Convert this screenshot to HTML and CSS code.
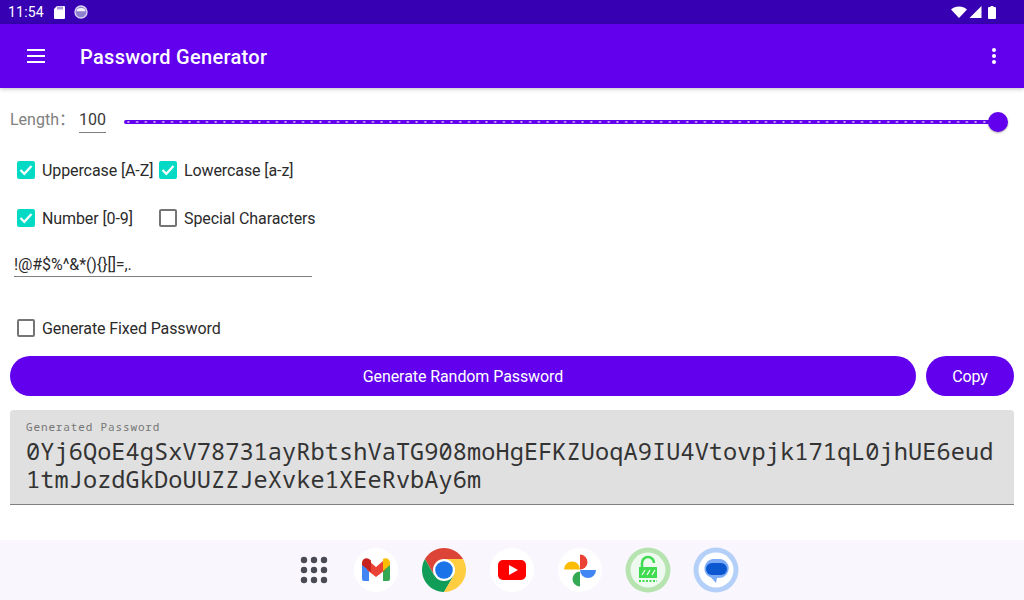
FILE: index.html
```html
<!DOCTYPE html>
<html lang="en">
<head>
<meta charset="utf-8">
<title>Password Generator</title>
<link rel="stylesheet" href="styles.css">
</head>
<body>
<div class="status">
  <div class="status-left">
    <span class="clock">11:54</span>
    <svg class="sd" width="12" height="14" viewBox="0 0 12 14"><path fill="#fff" d="M4 1h7a1 1 0 0 1 1 1v11a1 1 0 0 1-1 1H2a1 1 0 0 1-1-1V4z"/><path stroke="#3700B3" stroke-width=".8" d="M5 1.500v3M7 1.500v3M9 1.500v3"/></svg>
    <svg class="sync" width="14" height="14" viewBox="0 0 14 14"><circle cx="7" cy="7" r="6" fill="#8f7fd0" stroke="#d8d2f2" stroke-width="1.400"/><path fill="#fff" d="M2.600 6.200a4.400 3.200 0 0 1 8.800 0z" opacity=".9"/></svg>
  </div>
  <div class="status-right">
    <svg width="16" height="12" viewBox="0 0 16 12"><path fill="#fff" d="M0 3.400C2 1.400 5 .4 8 .4s6 1 8 3L8 12z"/></svg>
    <svg width="13" height="12" viewBox="0 0 13 12"><path fill="#fff" d="M12.500 0v12H.5z"/></svg>
    <svg class="batt" width="8" height="13" viewBox="0 0 8 13"><path fill="#fff" d="M2.500 0h3v1H7a1 1 0 0 1 1 1v10a1 1 0 0 1-1 1H1a1 1 0 0 1-1-1V2a1 1 0 0 1 1-1h1.500z"/></svg>
  </div>
</div>

<header class="appbar">
  <svg class="menu" width="18" height="14" viewBox="0 0 18 14"><path fill="#fff" d="M0 0h18v2H0zM0 6h18v2H0zM0 12h18v2H0z"/></svg>
  <h1 class="title">Password Generator</h1>
  <svg class="more" width="4" height="16" viewBox="0 0 4 16"><circle cx="2" cy="2" r="2" fill="#fff"/><circle cx="2" cy="8" r="2" fill="#fff"/><circle cx="2" cy="14" r="2" fill="#fff"/></svg>
</header>

<main class="content">
  <div class="length-row">
    <span class="length-label">Length：</span>
    <span class="length-value">100</span>
    <div class="slider"><span class="thumb"></span></div>
  </div>

  <div class="options">
    <label class="opt"><span class="box on"><svg width="14" height="12" viewBox="0 0 14 12"><path fill="none" stroke="#fff" stroke-width="2.200" d="M1.500 6l3.800 3.800L12.500 2"/></svg></span>Uppercase [A-Z]</label>
    <label class="opt"><span class="box on"><svg width="14" height="12" viewBox="0 0 14 12"><path fill="none" stroke="#fff" stroke-width="2.200" d="M1.500 6l3.800 3.800L12.500 2"/></svg></span>Lowercase [a-z]</label>
    <label class="opt"><span class="box on"><svg width="14" height="12" viewBox="0 0 14 12"><path fill="none" stroke="#fff" stroke-width="2.200" d="M1.500 6l3.800 3.800L12.500 2"/></svg></span>Number [0-9]</label>
    <label class="opt"><span class="box"></span>Special Characters</label>
  </div>

  <div class="chars">!@#$%^&amp;*(){}[]=,.</div>

  <label class="opt fixed"><span class="box"></span>Generate Fixed Password</label>

  <div class="actions">
    <button class="btn grow">Generate Random Password</button>
    <button class="btn copy">Copy</button>
  </div>

  <section class="output">
    <div class="output-label">Generated Password</div>
    <div class="output-value">0Yj6QoE4gSxV78731ayRbtshVaTG908moHgEFKZUoqA9IU4Vtovpjk171qL0jhUE6eud<br>1tmJozdGkDoUUZZJeXvke1XEeRvbAy6m</div>
  </section>
</main>

<nav class="dock">
  <svg class="apps" width="28" height="28" viewBox="0 0 28 28"><g fill="#4a4a55"><circle cx="4" cy="4" r="3.200"/><circle cx="14" cy="4" r="3.200"/><circle cx="24" cy="4" r="3.200"/><circle cx="4" cy="14" r="3.200"/><circle cx="14" cy="14" r="3.200"/><circle cx="24" cy="14" r="3.200"/><circle cx="4" cy="24" r="3.200"/><circle cx="14" cy="24" r="3.200"/><circle cx="24" cy="24" r="3.200"/></g></svg>

  <svg class="ico" width="46" height="46" viewBox="0 0 46 46"><circle cx="23" cy="23" r="22" fill="#fff"/>
    <path fill="#4285f4" d="M9 17h7v17h-5a2 2 0 0 1-2-2z"/><path fill="#34a853" d="M30 17h7v15a2 2 0 0 1-2 2h-5z"/>
    <path fill="#ea4335" d="M16 14l7 6 7-6 2 1v8l-9 7-9-7v-8z"/><path fill="#c5221f" d="M9 16c0-4 4-6 7-4l2 1.500V25l-9-7z"/><path fill="#fbbc04" d="M37 16c0-4-4-6-7-4v12l7-6z"/></svg>

  <svg class="ico" width="46" height="46" viewBox="0 0 46 46">
    <path fill="#db4437" d="M23 12H42.050A22 22 0 0 0 3.950 12L13.500 28.500z"/>
    <path fill="#0f9d58" d="M3.950 12A22 22 0 0 0 23 45L33 28H13z"/>
    <path fill="#ffcd40" d="M42.050 12A22 22 0 0 1 23 45L33 28 23 12z"/>
    <circle cx="23" cy="23" r="11" fill="#fff"/><circle cx="23" cy="23" r="8.800" fill="#1a73e8"/></svg>

  <svg class="ico" width="46" height="46" viewBox="0 0 46 46"><circle cx="23" cy="23" r="22" fill="#fff"/>
    <rect x="9" y="13" width="28" height="20" rx="5" fill="#f00"/><path fill="#fff" d="M20 18l9 5-9 5z"/></svg>

  <svg class="ico" width="46" height="46" viewBox="0 0 46 46"><circle cx="23" cy="23" r="22" fill="#fff"/>
    <path fill="#ea4335" d="M23 7.500a7.500 7.500 0 0 1 0 15z"/><path fill="#4285f4" d="M23 23h16a7.500 7.500 0 0 1-16 0z"/><path fill="#34a853" d="M23 23.500v16a7.500 7.500 0 0 1 0-15z"/><path fill="#fbbc04" d="M23 22.500H7a7.500 7.500 0 0 1 16 0z"/></svg>

  <svg class="ico" width="46" height="46" viewBox="0 0 46 46"><circle cx="23" cy="23" r="22.500" fill="#b6e3b0"/><circle cx="23" cy="23" r="17.500" fill="#eef9f0"/>
    <path fill="none" stroke="#3fdc4f" stroke-width="2.500" d="M17 20v-4a6 6 0 0 1 12 0"/><rect x="14" y="20" width="18" height="11" fill="#3fdc4f"/><path stroke="#eef9f0" stroke-width="1.300" d="M17 28l3-5M22 28l3-5M27 28l3-5"/>
    <path stroke="#3fdc4f" stroke-width="2" stroke-dasharray="2 1.500" d="M14 34h18"/></svg>

  <svg class="ico" width="46" height="46" viewBox="0 0 46 46"><circle cx="23" cy="23" r="22.500" fill="#b5d0f8"/><circle cx="23" cy="23" r="17.500" fill="#fff"/>
    <path fill="#7baaf7" d="M20 12h7a9.500 9.500 0 0 1 1 18.800L24 31l-1 5-5-5.500a9.500 9.500 0 0 1 2-18.500z"/><rect x="13" y="16" width="21" height="12" rx="6" fill="#0b57d0"/></svg>
</nav>
</body>
</html>
```

FILE: styles.css
```css
* { box-sizing: border-box; }
html, body { margin: 0; padding: 0; }
body {
  width: 1024px;
  height: 600px;
  overflow: hidden;
  display: flex;
  flex-direction: column;
  background: #fff;
  font-family: Roboto, sans-serif;
  color: #2b2b2b;
}
.status {
  height: 24px;
  flex: none;
  background: #3700B3;
  color: #fff;
  display: flex;
  align-items: center;
  justify-content: space-between;
  padding: 0 28px 0 8px;
}
.status-left { display: flex; align-items: center; }
.clock { font-size: 14px; letter-spacing: .2px; width: 45px; }
.sd { margin-right: 9px; }
.status-right { display: flex; align-items: center; gap: 2px; }
.batt { margin-left: 4px; }
.appbar {
  height: 64px;
  flex: none;
  background: #6200EE;
  display: flex;
  align-items: center;
  padding: 0 28px 0 27px;
  box-shadow: 0 1px 4px rgba(0,0,0,.25);
  position: relative;
}
.menu { margin-right: 35px; }
.title {
  margin: 2px 0 0;
  flex: 1;
  color: #fff;
  font-size: 20px;
  font-weight: 500;
  letter-spacing: .3px;
}
.content { flex: 1; padding: 0 10px; display: flex; flex-direction: column; }
.length-row { height: 58px; flex: none; display: flex; align-items: center; padding-top: 8px; }
.length-label { width: 69px; font-size: 16px; color: #808080; font-family: Roboto, "Noto Sans CJK SC", sans-serif; margin-top: -6px; }
.length-value {
  width: 27px;
  font-size: 16px;
  color: #3a3a3a;
  border-bottom: 1px solid #808080;
  padding-bottom: 3px;
}
.slider {
  flex: none;
  width: 874px;
  margin-left: 18px;
  height: 4px;
  margin-top: 2px;
  border-radius: 2px;
  background-color: #6200EE;
  background-image: radial-gradient(circle at center, #c9a7fa 0 1px, transparent 1.2px);
  background-size: 8.74px 4px;
  position: relative;
}
.thumb {
  position: absolute;
  right: -10px;
  top: -8px;
  width: 20px;
  height: 20px;
  border-radius: 50%;
  background: #6200EE;
  box-shadow: 0 1px 2px rgba(0,0,0,.35);
}
.options { display: grid; grid-template-columns: 142px auto; justify-content: start; grid-auto-rows: 48px; flex: none; }
.opt { display: flex; align-items: center; font-size: 16px; letter-spacing: -.1px; padding-left: 7px; height: 48px; white-space: nowrap; }
.box {
  width: 18px;
  height: 18px;
  border-radius: 2px;
  border: 2px solid #757575;
  margin-right: 7px;
  flex: none;
  display: flex;
  align-items: center;
  justify-content: center;
}
.box.on { background: #03DAC5; border-color: #03DAC5; }
.chars {
  width: 298px;
  height: 35px;
  margin-left: 4px;
  flex: none;
  font-size: 16px;
  letter-spacing: -.08px;
  line-height: 19px;
  padding-top: 13px;
  border-bottom: 1px solid #808080;
}
.fixed { margin-top: 27px; flex: none; }
.actions { display: flex; gap: 10px; margin-top: 4px; flex: none; }
.btn {
  height: 40px;
  border: 0;
  border-radius: 20px;
  background: #6200EE;
  color: #fff;
  font: 400 16px Roboto, sans-serif;
  letter-spacing: -.08px;
  padding: 0;
}
.grow { flex: 1; }
.copy { width: 88px; }
.output {
  margin-top: 14px;
  height: 95px;
  flex: none;
  background: #e0e0e0;
  border-radius: 4px 4px 0 0;
  border-bottom: 1px solid #808080;
  padding: 10px 16px 0;
}
.output-label { font-family: "Noto Sans Mono", "DejaVu Sans Mono", monospace; font-size: 11px; letter-spacing: .86px; color: #757575; line-height: 14px; }
.output-value { font-family: "Noto Sans Mono", "DejaVu Sans Mono", monospace; font-size: 23.600px; letter-spacing: .07px; line-height: 28px; color: #333; margin-top: 3px; white-space: nowrap; }
.dock {
  height: 60px;
  flex: none;
  background: #f9f6fd;
  display: flex;
  align-items: center;
  justify-content: center;
  gap: 22px;
  padding-left: 14px;
}
.apps { margin-right: 3px; }
```
